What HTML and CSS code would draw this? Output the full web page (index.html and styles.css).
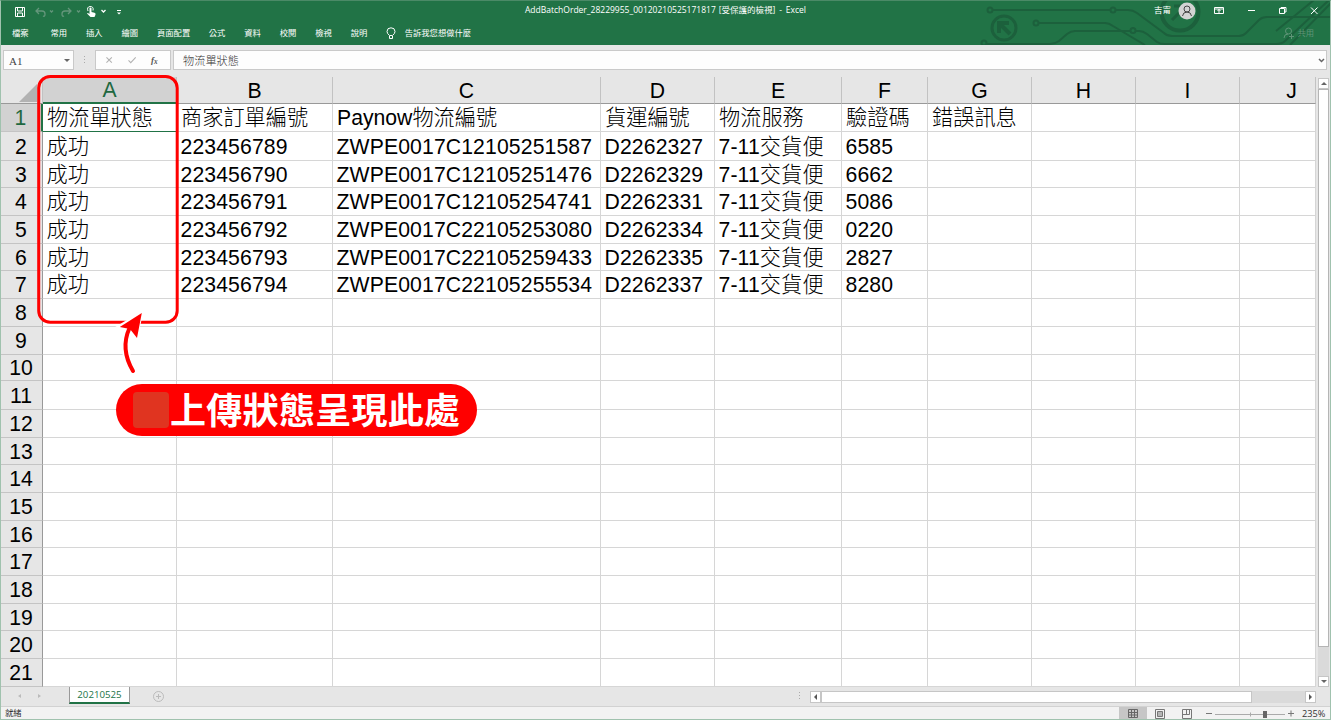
FILE: index.html
```html
<!DOCTYPE html>
<html lang="zh-Hant">
<head>
<meta charset="utf-8">
<title>AddBatchOrder - Excel</title>
<link rel="stylesheet" href="styles.css">
</head>
<body>
<div class="window">
  <header class="ribbon">
    <svg class="circuit" width="371" height="45" viewBox="0 0 371 45" fill="none" stroke="#1c603c" stroke-width="2">
      <circle cx="30" cy="10" r="2.5"/><path d="M33 10H151"/><circle cx="153" cy="10" r="2.5"/><path d="M156 10h12q5 0 9 3l27 20q3 3 8 3h67q4 0 7-3l13-13q3-3 8-3h64"/>
      <circle cx="76" cy="23" r="2.5"/><path d="M79 23h66q4 0 8 3l32 19"/>
      <circle cx="24" cy="43" r="2.5"/><path d="M27 44h63q5 0 9-3l8-7q4-3 8-3h55"/><circle cx="173" cy="30.500" r="2.500"/><path d="M176 31h3q4 0 8 3l10 8q3 2 8 2h111q6 0 9-3l44-41M330 45l42-43M316 31l38-31"/>
      <circle cx="44" cy="28" r="12" stroke-width="3"/><path stroke-width="4" d="M50 34l-10-10M39 33V23h10"/>
      <circle cx="220" cy="12" r="18.500" stroke-width="4"/><path stroke-width="3" d="M212 20l12-12M214 6h11v11"/>
    </svg>
    <div class="titlebar">
      <svg class="quick" width="130" height="22" viewBox="0 0 130 22" fill="none" stroke="#fff">
        <path d="M15.500 7.500h9v9h-9zM17.500 7.500v3.500h5V7.500M17.500 16v-3h5v3"/>
        <g stroke="#64967b" stroke-width="1.300"><path d="M39 8L36 11l3 3M36 11h6q3 0 3 3t-2 2M50 10.500l1.500 1.500 1.500-1.500M68 8l3 3-3 3M71 11h-6q-3 0-3 3t2 2M77 10.500l1.500 1.500 1.500-1.500"/></g>
        <path d="M88 11q-1.500-4 2-4.500 4 0 3 4" /><path fill="#fff" stroke="none" d="M89.500 8q1-1 2 0v4l3 .7q1.500.5 1 2l-1 2.300h-4L87 13.500q.5-1 2.500.5z"/>
        <path stroke-width="1.300" d="M101.500 10l2 2 2-2"/><path d="M117 10.500h4"/><path fill="#fff" stroke="none" d="M117 12.500h4l-2 2z"/>
      </svg>
      <div class="title"><span class="file">AddBatchOrder_28229955_00120210525171817</span><span>[受保護的檢視]</span><span>-</span><span>Excel</span></div>
      <div class="account"><span>吉甯</span>
        <svg width="18" height="18" viewBox="0 0 18 18"><circle cx="9" cy="9" r="8.500" fill="#d3d3d3"/><g fill="none" stroke="#444"><circle cx="9" cy="7" r="3"/><path d="M4.500 14q.5-4 4.500-4t4.500 4"/></g></svg>
      </div>
      <svg class="controls" width="120" height="22" viewBox="0 0 120 22" fill="none" stroke="#fff">
        <path d="M3.500 7.500h9v6h-9zM3.500 9h9M8 13v-4M6.500 11L8 9.500 9.500 11M37 10.500h7M68.500 8.500h5v5h-5zM70 8V7.500h5V12h-1M100 7.500l6.500 6.500m0-6.500L100 14"/>
      </svg>
    </div>
    <nav class="tabs">
      <span>檔案</span><span>常用</span><span>插入</span><span>繪圖</span><span>頁面配置</span><span>公式</span><span>資料</span><span>校閱</span><span>檢視</span><span>說明</span>
      <svg width="10" height="13" viewBox="0 0 10 13" fill="none" stroke="#fff"><path d="M3.500 8.500Q1 6.500 1 4.500a4 3.700 0 0 1 8 0q0 2-2.500 4zM3.500 9v2.500h3V9"/></svg>
      <span class="tell">告訴我您想做什麼</span>
      <span class="share"><svg width="11" height="12" viewBox="0 0 11 12" fill="none" stroke="#5f9477"><circle cx="5.500" cy="4" r="3"/><path d="M1 11q0-4 4-4M8.500 7v5M6 9.500h5"/></svg>共用</span>
    </nav>
  </header>

  <section class="formula">
    <div class="name">A1<i class="tri down"></i></div>
    <svg class="grip" width="3" height="9"><path d="M1.500 0v9" stroke="#aaa" stroke-dasharray="1 2"/></svg>
    <svg class="buttons" width="76" height="20" viewBox="0 0 76 20" fill="none" stroke="#b2b2b2" stroke-width="1.200"><path d="M8.500 7l6 6m0-6l-6 6M33 10.500l2.500 2.500 5.500-6"/><text class="fx" x="58" y="13" fill="#555" stroke="none">f<tspan dx="0" dy="1" font-size="8">x</tspan></text></svg>
    <div class="input">物流單狀態<svg width="7" height="5" viewBox="0 0 7 5" fill="none" stroke="#666" stroke-width="1.500"><path d="M1 1l2.500 2.500L6 1"/></svg></div>
  </section>

  <main class="work">
    <table class="sheet">
      <colgroup><col class="c0"><col class="ca"><col class="cb"><col class="cc"><col class="cd"><col class="ce"><col class="cf"><col class="cg"><col class="cg"><col class="cg"><col class="cj"></colgroup>
      <thead><tr><th class="corner"><svg width="18" height="18"><path d="M18 0v18H0z" fill="#b2b2b2"/></svg></th><th class="on">A</th><th>B</th><th>C</th><th>D</th><th>E</th><th>F</th><th>G</th><th>H</th><th>I</th><th class="last">J</th></tr></thead>
      <tbody>
      <tr class="labels"><th class="on">1</th><td class="active">物流單狀態</td><td>商家訂單編號</td><td>Paynow物流編號</td><td>貨運編號</td><td>物流服務</td><td>驗證碼</td><td>錯誤訊息</td><td></td><td></td><td></td></tr>
      <tr class="h29"><th>2</th><td>成功</td><td>223456789</td><td>ZWPE0017C12105251587</td><td>D2262327</td><td>7-11交貨便</td><td>6585</td><td></td><td></td><td></td><td></td></tr>
      <tr class="h27"><th>3</th><td>成功</td><td>223456790</td><td>ZWPE0017C12105251476</td><td>D2262329</td><td>7-11交貨便</td><td>6662</td><td></td><td></td><td></td><td></td></tr>
      <tr><th>4</th><td>成功</td><td>223456791</td><td>ZWPE0017C12105254741</td><td>D2262331</td><td>7-11交貨便</td><td>5086</td><td></td><td></td><td></td><td></td></tr>
      <tr><th>5</th><td>成功</td><td>223456792</td><td>ZWPE0017C22105253080</td><td>D2262334</td><td>7-11交貨便</td><td>0220</td><td></td><td></td><td></td><td></td></tr>
      <tr class="h27"><th>6</th><td>成功</td><td>223456793</td><td>ZWPE0017C22105259433</td><td>D2262335</td><td>7-11交貨便</td><td>2827</td><td></td><td></td><td></td><td></td></tr>
      <tr><th>7</th><td>成功</td><td>223456794</td><td>ZWPE0017C22105255534</td><td>D2262337</td><td>7-11交貨便</td><td>8280</td><td></td><td></td><td></td><td></td></tr>
      <tr><th>8</th><td></td><td></td><td></td><td></td><td></td><td></td><td></td><td></td><td></td><td></td></tr>
      <tr><th>9</th><td></td><td></td><td></td><td></td><td></td><td></td><td></td><td></td><td></td><td></td></tr>
      <tr class="h26"><th>10</th><td></td><td></td><td></td><td></td><td></td><td></td><td></td><td></td><td></td><td></td></tr>
      <tr class="h29"><th>11</th><td></td><td></td><td></td><td></td><td></td><td></td><td></td><td></td><td></td><td></td></tr>
      <tr><th>12</th><td></td><td></td><td></td><td></td><td></td><td></td><td></td><td></td><td></td><td></td></tr>
      <tr class="h27"><th>13</th><td></td><td></td><td></td><td></td><td></td><td></td><td></td><td></td><td></td><td></td></tr>
      <tr><th>14</th><td></td><td></td><td></td><td></td><td></td><td></td><td></td><td></td><td></td><td></td></tr>
      <tr><th>15</th><td></td><td></td><td></td><td></td><td></td><td></td><td></td><td></td><td></td><td></td></tr>
      <tr class="h27"><th>16</th><td></td><td></td><td></td><td></td><td></td><td></td><td></td><td></td><td></td><td></td></tr>
      <tr><th>17</th><td></td><td></td><td></td><td></td><td></td><td></td><td></td><td></td><td></td><td></td></tr>
      <tr><th>18</th><td></td><td></td><td></td><td></td><td></td><td></td><td></td><td></td><td></td><td></td></tr>
      <tr class="h27"><th>19</th><td></td><td></td><td></td><td></td><td></td><td></td><td></td><td></td><td></td><td></td></tr>
      <tr><th>20</th><td></td><td></td><td></td><td></td><td></td><td></td><td></td><td></td><td></td><td></td></tr>
      <tr><th>21</th><td></td><td></td><td></td><td></td><td></td><td></td><td></td><td></td><td></td><td></td></tr>
      </tbody>
    </table>
    <div class="vscroll"><div class="arrow"><i class="tri up"></i></div><div class="thumb"></div><div class="arrow end"><i class="tri down"></i></div></div>
  </main>

  <section class="sheets">
    <div class="nav"><i class="tri left pale"></i><i class="tri right pale"></i></div>
    <div class="tab">20210525</div>
    <svg class="add" width="11" height="11" viewBox="0 0 11 11" fill="none" stroke="#bbb"><circle cx="5.500" cy="5.500" r="5"/><path d="M5.500 3v5M3 5.500h5"/></svg>
    <svg class="grip" width="3" height="9"><path d="M1.500 0v9" stroke="#aaa" stroke-dasharray="1 2"/></svg>
    <div class="hscroll"><div class="arrow"><i class="tri left"></i></div><div class="thumb"></div><div class="arrow"><i class="tri right"></i></div></div>
  </section>

  <footer class="status">
    <span class="ready">就緒</span>
    <div class="view"><svg width="10" height="10" viewBox="0 0 10 10" fill="none" stroke="#666"><path d="M.5.500h9v8h-9zM0 3.500h10M0 6h10M3.500 0v9M6.500 0v9"/></svg></div>
    <svg class="modes" width="40" height="12" viewBox="0 0 40 12" fill="none" stroke="#777"><path d="M.5 1.500h9v9h-9zM2.500 3.500h5v5h-5zM3 5h4M3 7h4M27.500 1.500h9v9h-9zM31.500 1v5M27 6.500h5M34.500 1v5.500H32"/></svg>
    <svg class="slider" width="90" height="12" viewBox="0 0 90 12" fill="none" stroke="#777"><path d="M0 5.500h6M82 5.500h6M85 2.500v6"/><path stroke="#aaa" d="M9 6.500h70M44.500 4.500v4"/><path fill="#666" stroke="none" d="M57 3h4v7h-4z"/></svg>
    <span class="zoom">235%</span>
  </footer>

  <svg class="callout" width="460" height="370" viewBox="30 70 460 370" fill="none">
    <rect x="38.700" y="76.500" width="138.500" height="245.700" rx="11.500" stroke="#f00" stroke-width="3"/>
    <path d="M142 312l-24.500 14.800 8.700 1.500q-9 20 4.500 45l4-2.500q-10-20-2-40l3.800 9z" fill="#fff" stroke="#fff" stroke-width="2"/>
    <path d="M133 371q-13-22-3.500-43" stroke="#f00" stroke-width="4" stroke-linecap="round"/>
    <path d="M141.800 313l-22 14 10.200 2 7 9z" fill="#f00"/>
  </svg>
  <div class="bubble"><i></i><span>上傳狀態呈現此處</span></div>
</div>
</body>
</html>
```

FILE: styles.css
```css
* { box-sizing: border-box; }
body { margin: 0; overflow: hidden; font-family: "Open Sans", "Noto Sans CJK TC", sans-serif; }
svg { display: block; flex: none; }
.window { position: relative; width: 1331px; height: 720px; display: flex; flex-direction: column; background: #e6e6e6; }
.window::after { content: ""; position: absolute; inset: 0; border: 1px solid #a0c2ae; border-top-color: #4b8a67; pointer-events: none; }

.ribbon { position: relative; height: 45px; background: #217346; color: #fff; font-size: 8.5px; }
.circuit { position: absolute; right: 0; top: 0; }
.titlebar { position: relative; height: 22px; display: flex; align-items: center; }
.title { width: 281px; margin-left: 395px; display: flex; justify-content: space-between; line-height: 18px; padding-bottom: 2px; white-space: nowrap; }
.title .file { width: 190px; }
.account { margin-left: 348px; display: flex; align-items: center; gap: 7px; line-height: 18px; }
.account span { margin-top: -2px; }
.controls { margin-left: 15px; }
.tabs { position: relative; height: 23px; display: flex; align-items: center; padding: 0 0 1px 12px; gap: 18.500px; line-height: 20px; white-space: nowrap; font-size: 8.300px; }
.tabs span { flex: none; min-width: 17px; }
.tabs span:first-child { margin-right: 3px; }
.tabs .tell { margin-left: -10px; }
.tabs .share { margin-left: auto; margin-right: 17px; display: flex; align-items: center; gap: 3px; color: #5f9477; }

.formula { height: 32px; display: flex; align-items: flex-start; padding: 5px 4px 0 3px; }
.name, .buttons, .input { height: 20px; background: #fdfdfd; border: 1px solid #c9c9c9; }
.name { width: 71px; display: flex; align-items: center; justify-content: space-between; padding: 1px 3px 0 5px; font: 11px "Liberation Serif", serif; color: #444; }
.formula .grip { margin: 6px 9px 0 9px; }
.buttons { width: 76px; }
.fx { font: italic bold 10px "Liberation Serif", serif; }
.input { flex: 1; margin-left: 2px; padding: 1px 1px 0 9px; display: flex; align-items: center; justify-content: space-between; color: #333; font-size: 11.200px; line-height: 16px; font-weight: 300; }

.tri { width: 0; height: 0; border: 3px solid transparent; }
.tri.down { border-top-color: #666; border-bottom: 0; }
.tri.up { border-bottom-color: #666; border-top: 0; }
.tri.left { border-right-color: #555; border-left: 0; }
.tri.right { border-left-color: #555; border-right: 0; }
.tri.pale { border-width: 2px; }
.tri.left.pale { border-right: 3px solid #bbb; }
.tri.right.pale { border-left: 3px solid #bbb; }

.work { height: 610px; display: flex; }
.sheet { width: 1316px; table-layout: fixed; border-collapse: separate; border-spacing: 0; background: #fff; font: 300 21.200px/24px "Liberation Sans", "Noto Sans CJK TC", sans-serif; color: #000; }
.c0 { width: 43px; } .ca { width: 134px; } .cb { width: 156px; } .cc { width: 268px; } .cd { width: 114px; }
.ce { width: 127px; } .cf { width: 86px; } .cg { width: 104px; } .cj { width: 76px; }
.sheet tr { height: 28px; }
.sheet thead tr { height: 27px; }
.sheet .h26 { height: 26px; } .sheet .h27 { height: 27px; } .sheet .h29 { height: 29px; }
.sheet th, .sheet td { padding: 0; border-right: 1px solid #d6d6d6; border-bottom: 1px solid #d6d6d6; white-space: nowrap; }
.sheet th { background: #e6e6e6; font-weight: 400; text-align: center; border-right-color: #999; border-bottom-color: #c4c4c4; }
.sheet thead th { padding-top: 2px; border-right-color: #c2c2c2; border-bottom-color: #999; }
.sheet thead .last { padding-left: 28px; }
.sheet thead .on { padding-top: 1px; background: #d2d2d2; color: #1e6840; border-bottom: 2px solid #217346; }
.sheet tbody .on { background: #d2d2d2; color: #1e6840; border-right: 2px solid #217346; }
.sheet thead .corner { padding: 0; }
.corner svg { margin: 6px 0 0 19px; }
.sheet tbody th { padding-top: 1px; line-height: 24px; }
.sheet td { padding: 1px 0 0 3.500px; line-height: 24px; letter-spacing: .12px; }
.sheet .labels td { padding: 0 0 0 4px; letter-spacing: 0; }
.sheet .active { border: 1px solid #217346; border-width: 0 1px 1px 0; }
.vscroll { width: 11px; margin: 1px 0 0 2px; display: flex; flex-direction: column; background: #dadada; }
.arrow { flex: none; display: flex; align-items: center; justify-content: center; background: #fff; border: 1px solid #c6c6c6; }
.vscroll .arrow { height: 11px; }
.vscroll .thumb { height: 558px; background: #fff; border: 1px solid #b5b5b5; }
.vscroll .end { margin-top: auto; }

.sheets { height: 19px; display: flex; align-items: flex-start; }
.nav { width: 69px; display: flex; gap: 17px; padding: 7px 0 0 18px; }
.tab { width: 61px; height: 17px; background: #fff; border: 1px solid #999; border-width: 0 1px 2px; border-bottom-color: #217346; color: #217346; text-align: center; font-size: 9.700px; line-height: 15px; }
.add { margin: 4px 0 0 23px; }
.sheets .grip { margin: 5px 0 0 634px; }
.hscroll { width: 506px; height: 12px; margin: 4px 0 0 9px; display: flex; background: #dadada; }
.hscroll .arrow { width: 11px; }
.hscroll .thumb { width: 431px; background: #fff; border: 1px solid #c6c6c6; }
.hscroll .arrow:last-child { margin-left: auto; }

.status { height: 14px; display: flex; align-items: center; background: #f2f2f2; border-top: 1px solid #d2d2d2; color: #333; font-size: 8.300px; line-height: 12px; }
.ready { width: 1114px; padding: 0 0 1px 5px; }
.view { width: 28px; height: 14px; margin-left: 5px; background: #c6c6c6; display: flex; align-items: center; justify-content: center; }
.modes { margin-left: 8px; }
.slider { margin-left: 11px; }
.zoom { margin-left: 6px; font-size: 9.200px; }

.callout { position: absolute; left: 30px; top: 70px; }
.bubble { position: absolute; left: 116px; top: 384px; width: 361px; height: 52px; padding-left: 17px; display: flex; align-items: center; gap: 1px; border-radius: 26px; background: #f00; color: #fff; font: 700 36px/50px "Noto Sans CJK TC", sans-serif; letter-spacing: .3px; white-space: nowrap; }
.bubble span { margin-top: -4px; }
.bubble i { width: 36px; height: 36px; border-radius: 4px; background: #e03420; }
```
